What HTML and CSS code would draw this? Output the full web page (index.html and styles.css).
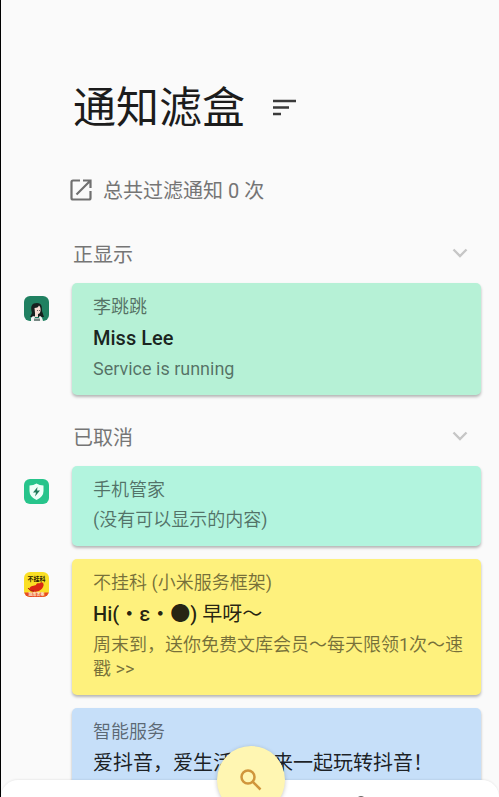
FILE: index.html
```html
<!DOCTYPE html>
<html lang="zh-CN">
<head>
<meta charset="utf-8">
<meta name="viewport" content="width=device-width, initial-scale=1">
<title>通知滤盒</title>
<link rel="stylesheet" href="styles.css">
</head>
<body>
<div class="app">
  <header class="header">
    <h1 class="title">通知滤盒</h1>
    <button class="icon-button" type="button" aria-label="排序">
      <svg width="24" height="18" viewBox="0 0 24 18" fill="none" stroke="#3a3a3a" stroke-width="2.400"><path d="M0 2H23M0 8.500H16M0 15H8"/></svg>
    </button>
  </header>
  <a class="summary" href="#">
    <svg width="22" height="22" viewBox="0 0 22 22" fill="none" stroke="#707070" stroke-width="2.200"><path d="M10 1.500H3Q1.500 1.500 1.500 3V19Q1.500 20.500 3 20.500H19Q20.500 20.500 20.500 19V12M13 1.500H20.500V9M20 2L6.500 15.500"/></svg>
    <span>总共过滤通知 0 次</span>
  </a>
  <main>
    <section class="group">
      <button class="group-header" type="button">
        <span>正显示</span>
        <svg width="16" height="10" viewBox="0 0 16 10" fill="none" stroke="#c6c6c6" stroke-width="2.400"><path d="M1.500 1.500L8 8L14.500 1.500"/></svg>
      </button>
      <div class="list">
        <article class="row">
          <svg class="app-icon" viewBox="0 0 25 25">
            <rect width="25" height="25" rx="6" fill="#208061"/>
            <path d="M8 17C6 10 8 7 13 7C18 7 18 11 18 15L20 21H6Z" fill="#16201e"/>
            <path d="M10.500 12Q14 12 15 9.500Q17 11 16.500 15Q16 18 14 18V21H11V17Z" fill="#f6dcd3"/>
            <path d="M7 25V22Q8 20 10.500 20L11 22H15L15.500 20Q18 20 19 25Z" fill="#f1f3f2"/>
            <path d="M10 22.500H16V25H10Z" fill="#768783"/>
            <path d="M13 14.500H14M15 14.500H16" stroke="#343434" stroke-width=".7"/>
          </svg>
          <div class="card card-green">
            <p class="app-name">李跳跳</p>
            <h2 class="card-title"><b>Miss Lee</b></h2>
            <p class="card-text">Service is running</p>
          </div>
        </article>
      </div>
    </section>
    <section class="group">
      <button class="group-header" type="button">
        <span>已取消</span>
        <svg width="16" height="10" viewBox="0 0 16 10" fill="none" stroke="#c6c6c6" stroke-width="2.400"><path d="M1.500 1.500L8 8L14.500 1.500"/></svg>
      </button>
      <div class="list">
        <article class="row">
          <svg class="app-icon" viewBox="0 0 25 25">
            <rect width="25" height="25" rx="6" fill="#27c48b"/>
            <path d="M12.500 4.500Q15.500 6.500 19.500 6.500V12Q19.500 18 12.500 21Q5.500 18 5.500 12V6.500Q9.500 6.500 12.500 4.500Z" fill="#effff8"/>
            <path d="M13.500 8L9 13.500H12L11 17.500L16 11.500H13Z" fill="#227a5b"/>
          </svg>
          <div class="card card-mint">
            <p class="app-name">手机管家</p>
            <p class="card-text">(没有可以显示的内容)</p>
          </div>
        </article>
        <article class="row">
          <svg class="app-icon" viewBox="0 0 25 25">
            <defs><clipPath id="exam-shape"><rect width="25" height="25" rx="6"/></clipPath></defs>
            <g clip-path="url(#exam-shape)">
              <rect width="25" height="25" fill="#fadf25"/>
              <path d="M0 20.500H25V25H0Z" fill="#e84b25"/>
              <path d="M5 17C7 13 10 14 12 13C13 10 15 12 16 11C18 9 21 12 19 15C17 20 8 22 5 17Z" fill="#d92814"/>
              <path d="M4 16Q6 20 10 19" fill="none" stroke="#a82012"/>
            </g>
            <text class="icon-name" x="12.500" y="9" text-anchor="middle">不挂科</text>
            <text class="icon-caption" x="12.500" y="24" text-anchor="middle">题库答案</text>
          </svg>
          <div class="card card-yellow">
            <p class="app-name">不挂科 (小米服务框架)</p>
            <h2 class="card-title"><b>Hi(・ε・●)</b> 早呀～</h2>
            <p class="card-text">周末到，送你免费文库会员～每天限领1次～速戳 &gt;&gt;</p>
          </div>
        </article>
        <article class="row">
          <span></span>
          <div class="card card-blue">
            <p class="app-name">智能服务</p>
            <h2 class="card-title">爱抖音，爱生活，快来一起玩转抖音！</h2>
          </div>
        </article>
      </div>
    </section>
  </main>
  <div class="bottom-sheet">
    <svg width="8" height="1" viewBox="0 0 8 1"><path d="M1 1Q4 -1 7 1Z" fill="#666"/></svg>
  </div>
  <button class="search" type="button" aria-label="搜索">
    <svg width="22" height="22" viewBox="0 0 22 22" fill="none" stroke="#d0963c" stroke-width="2.500"><circle cx="8" cy="8" r="6.500"/><path d="M12.500 12.500L20.500 20.500"/></svg>
  </button>
</div>
</body>
</html>
```
FILE: styles.css
```css
* {
  box-sizing: border-box;
}

body {
  margin: 0;
  background: #fafafa;
  font-family: Roboto, "Noto Sans CJK SC", sans-serif;
  color: #1c1c1c;
}

h1, h2, p {
  margin: 0;
}

button {
  border: 0;
  padding: 0;
  background: none;
  font: inherit;
  color: inherit;
  cursor: pointer;
}

svg {
  display: block;
  flex: none;
}

.app {
  position: relative;
  height: 100vh;
  overflow: hidden;
  border-left: 1px solid #000;
}

.header {
  display: flex;
  align-items: center;
  gap: 28px;
  padding: 78px 18px 0 72px;
}

.title {
  font-size: 43px;
  line-height: 60px;
  font-weight: 400;
}

.summary {
  display: flex;
  align-items: center;
  gap: 11px;
  height: 45px;
  margin: 29px 18px 0 69px;
  font-size: 20px;
  color: #757575;
  text-decoration: none;
}

.group {
  padding-top: 11px;
}

.group-header {
  display: flex;
  align-items: center;
  justify-content: space-between;
  width: 100%;
  height: 60px;
  padding: 0 31px 0 72px;
  font-size: 20px;
  color: #757575;
}

.list {
  display: grid;
  gap: 13px;
}

.row {
  display: grid;
  grid-template-columns: 48px 1fr;
  align-items: start;
  padding: 0 18px 0 23px;
}

.app-icon {
  width: 25px;
  height: 25px;
  margin-top: 13px;
}

.icon-name {
  font-size: 6px;
  font-weight: 700;
  fill: #292100;
}

.icon-caption {
  font-size: 4px;
  font-weight: 700;
  fill: #ffe8c8;
}

.card {
  display: grid;
  gap: 6px;
  padding: 12px 12px 14px 21px;
  border-radius: 5px;
  box-shadow: 0 2px 3px rgba(0, 0, 0, 0.28);
}

.card-green {
  background: #b6f1d6;
}

.card-mint {
  background: #b2f4de;
}

.card-yellow {
  background: #fef17d;
}

.card-blue {
  background: #c6dff9;
}

.app-name,
.card-text {
  font-size: 18px;
  line-height: 24px;
  color: rgba(0, 0, 0, 0.54);
}

.card-title {
  font-size: 20px;
  line-height: 26px;
  font-weight: 400;
  color: rgba(0, 0, 0, 0.87);
}

.card-title b {
  font-weight: 500;
}

.bottom-sheet {
  position: absolute;
  left: 0;
  right: 0;
  bottom: 0;
  display: flex;
  align-items: flex-end;
  justify-content: center;
  height: 17px;
  padding-left: 222px;
  border-radius: 24px 24px 0 0;
  background: #fff;
  box-shadow: 0 -1px 2px rgba(0, 0, 0, 0.06);
}

.search {
  position: absolute;
  left: 50%;
  bottom: -17px;
  display: grid;
  place-items: center;
  width: 68px;
  height: 68px;
  margin-left: -33px;
  border-radius: 50%;
  background: #fff6b2;
  box-shadow: 0 1px 4px rgba(0, 0, 0, 0.22);
}
```
